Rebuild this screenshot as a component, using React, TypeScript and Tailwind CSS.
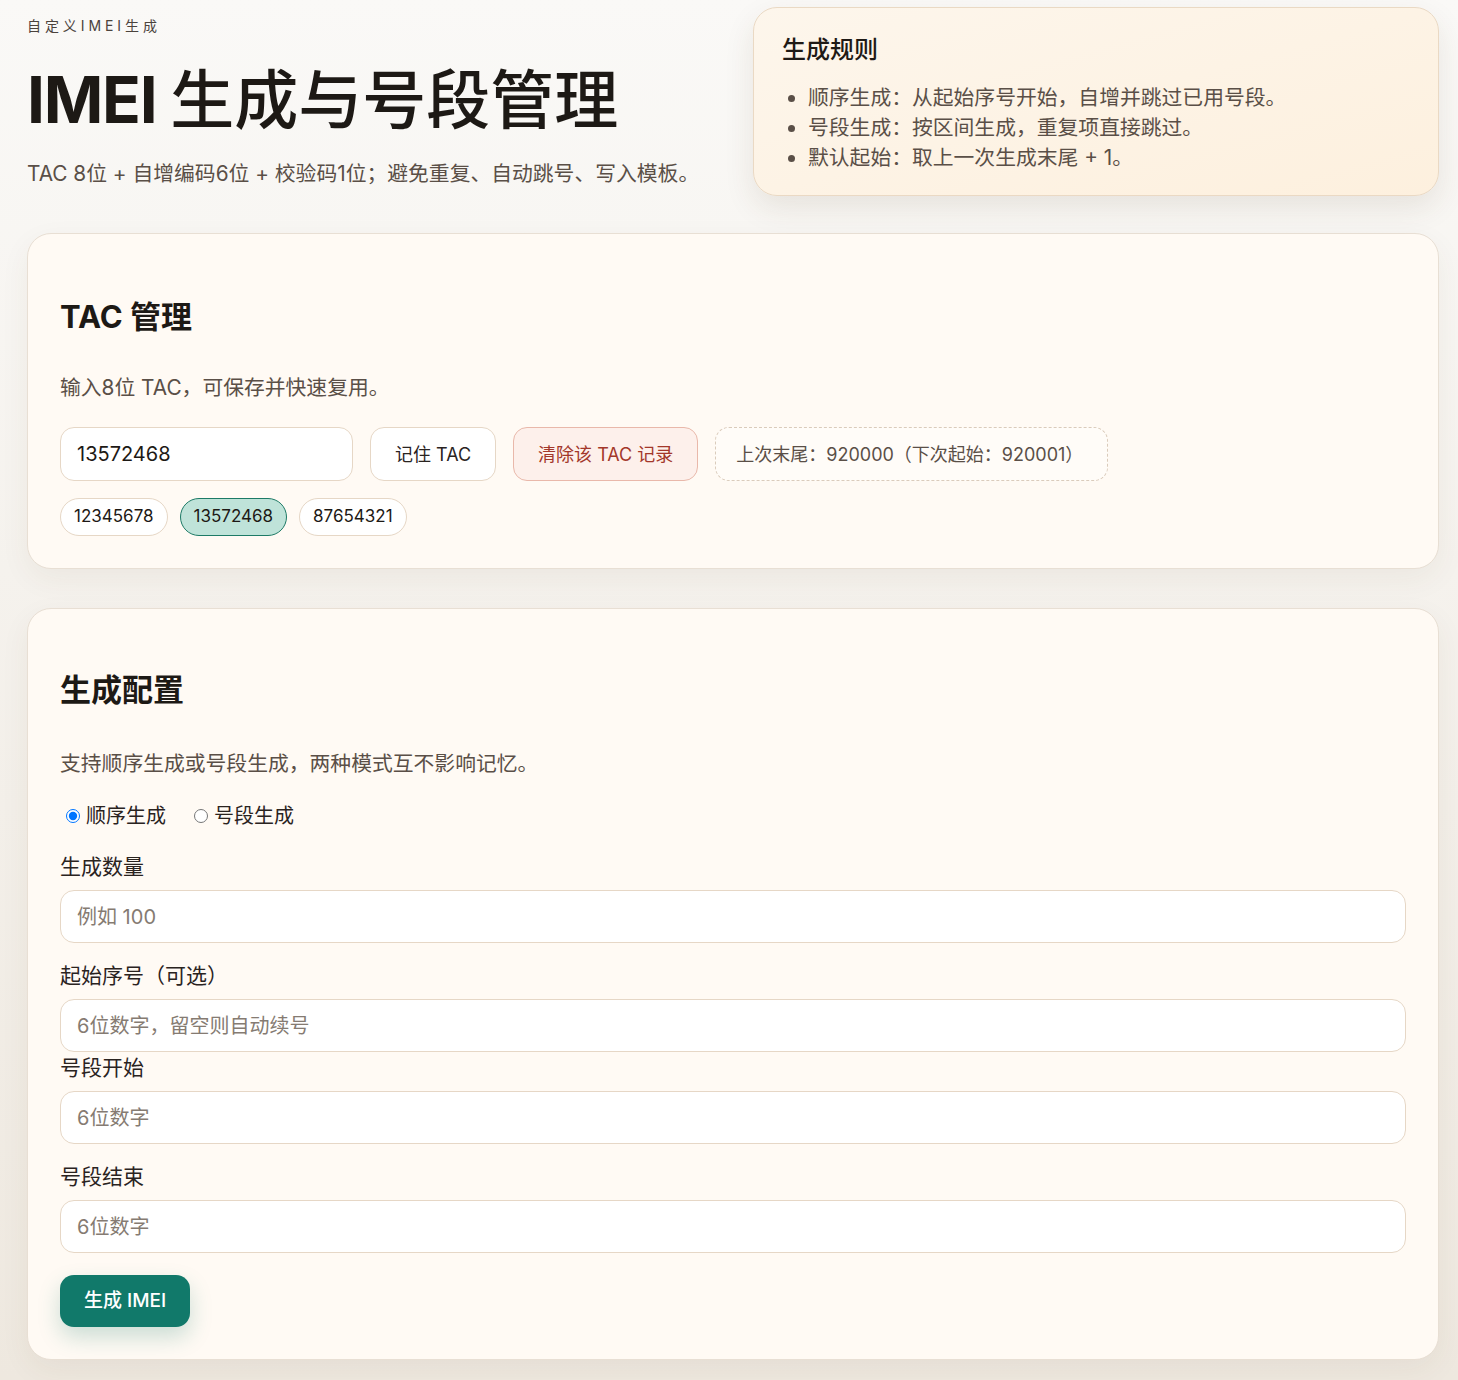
const font = "font-['Inter','Noto_Sans_CJK_SC',sans-serif]";

const Field = ({ label, placeholder, gap }: { label: string; placeholder: string; gap: string }) => (
  <div className={gap}>
    <div className="text-[21px] leading-[30px] text-[#2a231f]">{label}</div>
    <input
      placeholder={placeholder}
      className="mt-2 h-[53px] w-full rounded-[14px] border border-[#e6d7c6] bg-white px-4 text-[20px] text-[#2a231f] outline-none placeholder:text-[#857b72]"
    />
  </div>
);

const App = () => {
  return (
    <div className={`${font} min-h-[1380px] bg-gradient-to-b from-[#faf9f7] to-[#eee8df] pl-[27px] pr-[19px] pt-[7px] pb-[21px]`}>
      <div className="grid grid-cols-2 gap-10 mb-[37px]">
        <div className="pt-[9px]">
          <p className="text-[14px] leading-5 tracking-[0.28em] text-[#4b433d]">自定义IMEI生成</p>
          <h1 className="mt-[29px] text-[64px] leading-[70px] font-bold tracking-[-0.02em] text-[#1d1915]">
            IMEI <span className="font-medium tracking-normal">生成与号段管理</span>
          </h1>
          <p className="mt-[24px] text-[20.8px] leading-[30px] text-[#5a4f47]">
            TAC 8位 + 自增编码6位 + 校验码1位；避免重复、自动跳号、写入模板。
          </p>
        </div>
        <div className="h-[189px] rounded-[24px] border border-[#ead9c4] bg-gradient-to-br from-[#fdf6ec] to-[#fdf0de] px-7 pt-[26px] shadow-[0_12px_30px_rgba(80,60,30,0.10)]">
          <h3 className="text-[24px] leading-8 font-medium text-[#1f1a16]">生成规则</h3>
          <ul className="mt-[17px] list-disc pl-[26px] text-[20.8px] leading-[30px] text-[#5a4f47] marker:text-[#5a4f47]">
            <li>顺序生成：从起始序号开始，自增并跳过已用号段。</li>
            <li>号段生成：按区间生成，重复项直接跳过。</li>
            <li>默认起始：取上一次生成末尾 + 1。</li>
          </ul>
        </div>
      </div>

      <section className="rounded-[24px] border border-[#e8dfd4] bg-[#fffaf4] px-[32px] pt-[63px] pb-[32px] shadow-[0_10px_30px_rgba(80,60,30,0.06)]">
        <h2 className="text-[31px] leading-10 font-bold text-[#1d1915]">TAC 管理</h2>
        <p className="mt-[36px] text-[20.8px] leading-[30px] text-[#5a4f47]">输入8位 TAC，可保存并快速复用。</p>
        <div className="mt-[24px] flex items-center gap-[17px]">
          <input
            defaultValue="13572468"
            className="h-[54px] w-[293px] rounded-[14px] border border-[#e6d7c6] bg-white px-4 text-[20px] text-[#1d1915] outline-none"
          />
          <button className="h-[54px] rounded-[14px] border border-[#e6d7c6] bg-white px-6 text-[18px] text-[#2a231f]">记住 TAC</button>
          <button className="h-[54px] rounded-[14px] border border-[#e9b8aa] bg-[#fdf0eb] px-6 text-[18px] text-[#a3372a]">清除该 TAC 记录</button>
          <div className="flex h-[54px] items-center rounded-[14px] border border-dashed border-[#dacbbb] bg-[#fffcf8] pl-5 pr-6 text-[18px] text-[#5a4f47]">
            上次末尾：920000（下次起始：920001）
          </div>
        </div>
        <div className="mt-[17px] flex gap-3 text-[17px] text-[#1d1915]">
          <span className="flex h-[38px] items-center rounded-full border border-[#e6d7c6] bg-white px-[13px]">12345678</span>
          <span className="flex h-[38px] items-center rounded-full border border-[#1d7a66] bg-[#bfe3d9] px-[13px]">13572468</span>
          <span className="flex h-[38px] items-center rounded-full border border-[#e6d7c6] bg-white px-[13px]">87654321</span>
        </div>
      </section>

      <section className="mt-[39px] rounded-[24px] border border-[#e8dfd4] bg-[#fffaf4] px-[32px] pt-[61px] pb-[32px] shadow-[0_10px_30px_rgba(80,60,30,0.06)]">
        <h2 className="text-[31px] leading-10 font-bold text-[#1d1915]">生成配置</h2>
        <p className="mt-[39px] text-[20.8px] leading-[30px] text-[#5a4f47]">支持顺序生成或号段生成，两种模式互不影响记忆。</p>
        <div className="mt-[25px] flex items-center gap-7 pl-[6px] text-[20px] leading-6 text-[#2a231f]">
          <label className="flex items-center gap-[6px]">
            <input type="radio" name="mode" defaultChecked className="h-[14px] w-[14px]" />
            顺序生成
          </label>
          <label className="flex items-center gap-[6px]">
            <input type="radio" name="mode" className="h-[14px] w-[14px]" />
            号段生成
          </label>
        </div>
        <Field label="生成数量" placeholder="例如 100" gap="mt-[24px]" />
        <Field label="起始序号（可选）" placeholder="6位数字，留空则自动续号" gap="mt-[18px]" />
        <Field label="号段开始" placeholder="6位数字" gap="mt-[1px]" />
        <Field label="号段结束" placeholder="6位数字" gap="mt-[18px]" />
        <button className="mt-[22px] h-[52px] rounded-[14px] bg-[#11796a] px-6 text-[19px] font-medium text-white shadow-[0_10px_22px_rgba(17,121,106,0.22)]">
          生成 IMEI
        </button>
      </section>
    </div>
  );
};

export default App;
